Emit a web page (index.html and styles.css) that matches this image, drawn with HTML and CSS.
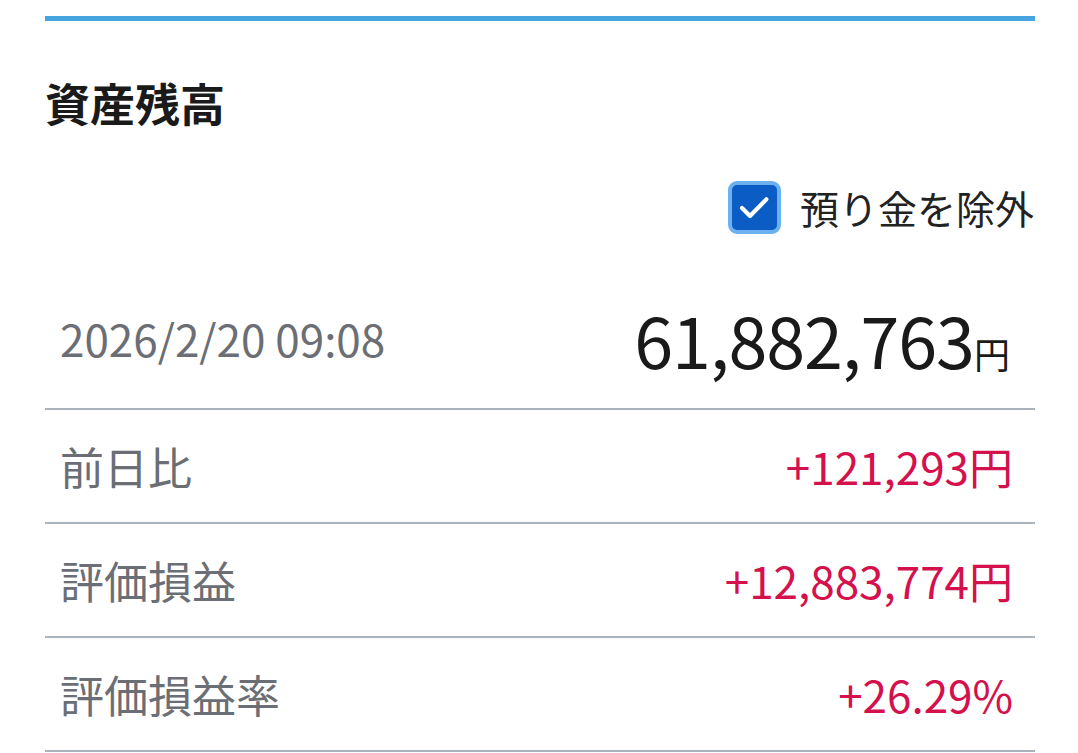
FILE: index.html
```html
<!DOCTYPE html>
<html lang="ja">
<head>
<meta charset="utf-8">
<link rel="stylesheet" href="styles.css">
</head>
<body>
<div class="card">
  <div class="topbar"></div>
  <h2 class="title">資産残高</h2>
  <div class="opt">
    <label class="check">
      <span class="box">
        <svg viewBox="0 0 24 24" width="40" height="40"><path d="M4.8 12.6l4.8 4.8L19.4 7.4" fill="none" stroke="#fff" stroke-width="2.5" stroke-linecap="round" stroke-linejoin="round"/></svg>
      </span>
      <span class="lbl">預り金を除外</span>
    </label>
  </div>
  <div class="row total">
    <span class="date">2026/2/20 09:08</span>
    <span class="big">61,882,763<span class="yen">円</span></span>
  </div>
  <div class="row">
    <span class="key">前日比</span>
    <span class="val">+121,293円</span>
  </div>
  <div class="row">
    <span class="key">評価損益</span>
    <span class="val">+12,883,774円</span>
  </div>
  <div class="row">
    <span class="key">評価損益率</span>
    <span class="val">+26.29%</span>
  </div>
</div>
</body>
</html>
```
FILE: styles.css
```css
html, body { margin: 0; padding: 0; background: #fff; }
body { font-family: "Noto Sans CJK JP", "Noto Sans", sans-serif; }
.card { margin: 0 43px 0 45px; padding-top: 16px; }
.topbar { height: 5px; background: #46a4e0; }
.title { margin: 0; padding-top: 52px; font-size: 45px; line-height: 60px; font-weight: 700; color: #1a1a1a; }
.opt { display: flex; justify-content: flex-end; margin-top: 46px; height: 56px; }
.check { display: flex; align-items: center; gap: 19px; height: 56px; }
.box { flex: 0 0 auto; width: 45px; height: 45px; border-radius: 9px; background: #0b5cc5; border: 4px solid #6cb2f0; display: flex; align-items: center; justify-content: center; }
.lbl { font-size: 39px; color: #222; line-height: 56px; margin-right: 1px; }
.row { display: flex; justify-content: space-between; align-items: center; height: 112px; padding: 0 25px 0 15px; border-bottom: 2px solid #a9b1ba; }
.row.total { height: 140px; padding-top: 33px; }
.date { font-size: 44px; color: #6b6e74; }
.big { font-size: 70px; color: #1a1a1a; letter-spacing: -1px; }
.yen { font-size: 36px; letter-spacing: 0; }
.key { font-size: 44px; color: #6b6e74; }
.val { font-size: 44px; color: #d4104d; margin-right: -3px; }
```
